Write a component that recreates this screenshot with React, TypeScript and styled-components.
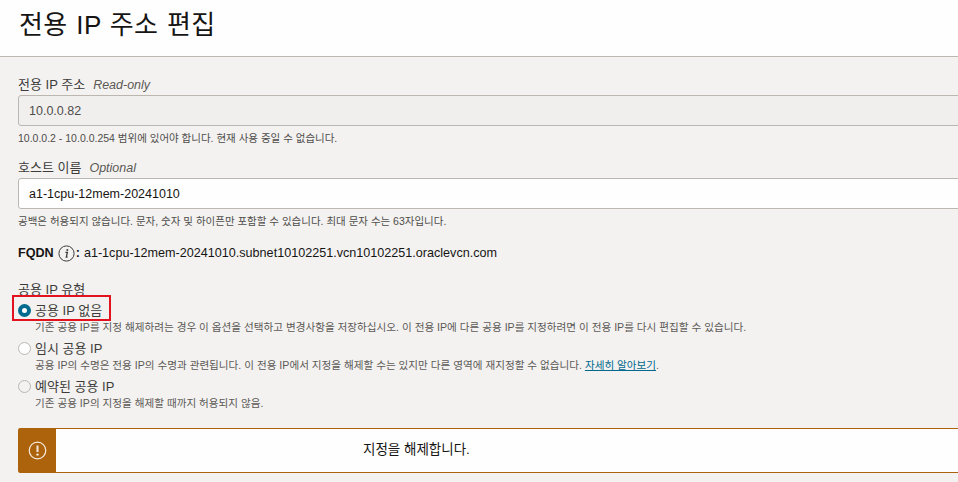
import * as React from 'react';
import styled, { createGlobalStyle } from 'styled-components';

const GlobalStyle = createGlobalStyle`
  html, body {
    margin: 0;
    padding: 0;
    height: 100%;
    overflow: hidden;
    background: #f3f2f1;
  }
  body {
    font-family: "Liberation Sans", "Noto Sans CJK KR", sans-serif;
    color: #161513;
  }
`;

const Page = styled.div`
  position: relative;
  width: 958px;
  height: 482px;
  overflow: hidden;
`;

const Header = styled.header`
  height: 56px;
  box-sizing: content-box;
  background: #fffefe;
  border-bottom: 1px solid #bcb6b1;
  padding-left: 19px;
`;

const Title = styled.h1`
  margin: 0;
  font-size: 26px;
  font-weight: 400;
  line-height: 50px;
  letter-spacing: 0.4px;
  word-spacing: 1px;
  color: #161513;
`;

const Content = styled.main`
  padding: 18px 0 0 18px;
`;

const Field = styled.div`
  margin-bottom: 12px;
`;

const Label = styled.label`
  display: flex;
  align-items: baseline;
  gap: 8px;
  height: 20px;
  line-height: 20px;
  font-size: 13px;
  color: #3d3c3a;
`;

const Hint = styled.em`
  font-size: 12.5px;
  color: #5c5955;
`;

const Input = styled.div<{ $readOnly?: boolean }>`
  box-sizing: border-box;
  width: 1000px;
  height: 31px;
  line-height: 30px;
  padding-left: 10px;
  font-size: 12.5px;
  border: 1px solid #bcb6b1;
  border-radius: 3px;
  background: ${p => (p.$readOnly ? '#f1efee' : '#fffefe')};
  color: ${p => (p.$readOnly ? '#4f4d4a' : '#161513')};
`;

const Help = styled.p`
  margin: 5px 0 0;
  font-size: 10.5px;
  line-height: 15px;
  color: #4f4d4a;
`;

const Fqdn = styled.div`
  display: flex;
  align-items: center;
  height: 20px;
  margin-top: 14px;
  font-size: 12.6px;
  color: #161513;
  b {
    font-weight: 700;
  }
`;

const InfoIcon = styled.svg`
  margin: 0 1px 0 4px;
`;

const FqdnValue = styled.span`
  margin-left: 4px;
`;

const GroupLabel = styled.div`
  margin-top: 18px;
  height: 20px;
  line-height: 18px;
  font-size: 13px;
  color: #3d3c3a;
`;

const Option = styled.div`
  display: grid;
  grid-template-columns: 17px 1fr;
  align-items: center;
  margin-bottom: 4px;
`;

const Radio = styled.span<{ $checked?: boolean; $disabled?: boolean }>`
  box-sizing: border-box;
  width: 13px;
  height: 13px;
  border-radius: 50%;
  background: ${p => (p.$disabled ? '#f3f2f1' : '#fffefe')};
  border: ${p => (p.$checked ? '4px solid #006b8f' : '1px solid #bcb6b1')};
`;

const OptionLabel = styled.div`
  height: 19px;
  line-height: 19px;
  font-size: 13px;
  color: #3d3c3a;
`;

const OptionHelp = styled.div`
  grid-column: 2;
  font-size: 10.6px;
  line-height: 15px;
  color: #5c5955;
  a {
    color: #00688c;
    text-decoration: underline;
  }
`;

const Alert = styled.div`
  box-sizing: border-box;
  display: flex;
  width: 1000px;
  height: 45px;
  margin-top: 17px;
  background: #fffefe;
  border-top: 1px solid #ac630c;
  border-bottom: 1px solid #ac630c;
  border-radius: 3px;
`;

const AlertIcon = styled.div`
  flex: 0 0 38px;
  margin: -1px 0;
  display: flex;
  align-items: center;
  justify-content: center;
  background: #ac630c;
  border-radius: 3px 0 0 3px;
`;

const AlertText = styled.div`
  padding-left: 307px;
  line-height: 42px;
  font-size: 13.5px;
  color: #161513;
`;

// screenshot annotation round the first option
const Highlight = styled.div`
  position: absolute;
  left: 12px;
  top: 295px;
  width: 99px;
  height: 26px;
  box-sizing: border-box;
  border: 2px solid #e2121f;
`;

export default function App() {
  return (
    <Page>
      <GlobalStyle />
      <Header>
        <Title>전용 IP 주소 편집</Title>
      </Header>
      <Content>
        <Field>
          <Label>
            전용 IP 주소 <Hint>Read-only</Hint>
          </Label>
          <Input $readOnly>10.0.0.82</Input>
          <Help>10.0.0.2 - 10.0.0.254 범위에 있어야 합니다. 현재 사용 중일 수 없습니다.</Help>
        </Field>
        <Field>
          <Label>
            호스트 이름 <Hint>Optional</Hint>
          </Label>
          <Input>a1-1cpu-12mem-20241010</Input>
          <Help>공백은 허용되지 않습니다. 문자, 숫자 및 하이픈만 포함할 수 있습니다. 최대 문자 수는 63자입니다.</Help>
        </Field>
        <Fqdn>
          <b>FQDN</b>
          <InfoIcon width="17" height="17" viewBox="0 0 17 17">
            <circle cx="8.5" cy="8.5" r="7.6" fill="none" stroke="#3d3c3a" strokeWidth="1" />
            <circle cx="9.3" cy="5" r="1" fill="#3d3c3a" />
            <path d="M7.4 7.4h2l-1.1 4.6h1.2" fill="none" stroke="#3d3c3a" strokeWidth="1.3" />
          </InfoIcon>
          <b>:</b>
          <FqdnValue>a1-1cpu-12mem-20241010.subnet10102251.vcn10102251.oraclevcn.com</FqdnValue>
        </Fqdn>
        <GroupLabel>공용 IP 유형</GroupLabel>
        <Option>
          <Radio $checked />
          <OptionLabel>공용 IP 없음</OptionLabel>
          <OptionHelp>
            기존 공용 IP를 지정 해제하려는 경우 이 옵션을 선택하고 변경사항을 저장하십시오. 이 전용 IP에 다른 공용 IP를 지정하려면 이 전용 IP를 다시 편집할 수 있습니다.
          </OptionHelp>
        </Option>
        <Option>
          <Radio />
          <OptionLabel>임시 공용 IP</OptionLabel>
          <OptionHelp>
            공용 IP의 수명은 전용 IP의 수명과 관련됩니다. 이 전용 IP에서 지정을 해제할 수는 있지만 다른 영역에 재지정할 수 없습니다. <a>자세히 알아보기</a>.
          </OptionHelp>
        </Option>
        <Option>
          <Radio $disabled />
          <OptionLabel>예약된 공용 IP</OptionLabel>
          <OptionHelp>기존 공용 IP의 지정을 해제할 때까지 허용되지 않음.</OptionHelp>
        </Option>
        <Alert>
          <AlertIcon>
            <svg width="19" height="19" viewBox="0 0 19 19">
              <circle cx="9.5" cy="9.5" r="8.3" fill="none" stroke="#f6e9da" strokeWidth="1.2" />
              <path d="M9.5 4.5v6.5" stroke="#f6e9da" strokeWidth="2" />
              <circle cx="9.5" cy="13.6" r="1.2" fill="#f6e9da" />
            </svg>
          </AlertIcon>
          <AlertText>지정을 해제합니다.</AlertText>
        </Alert>
      </Content>
      <Highlight />
    </Page>
  );
}
